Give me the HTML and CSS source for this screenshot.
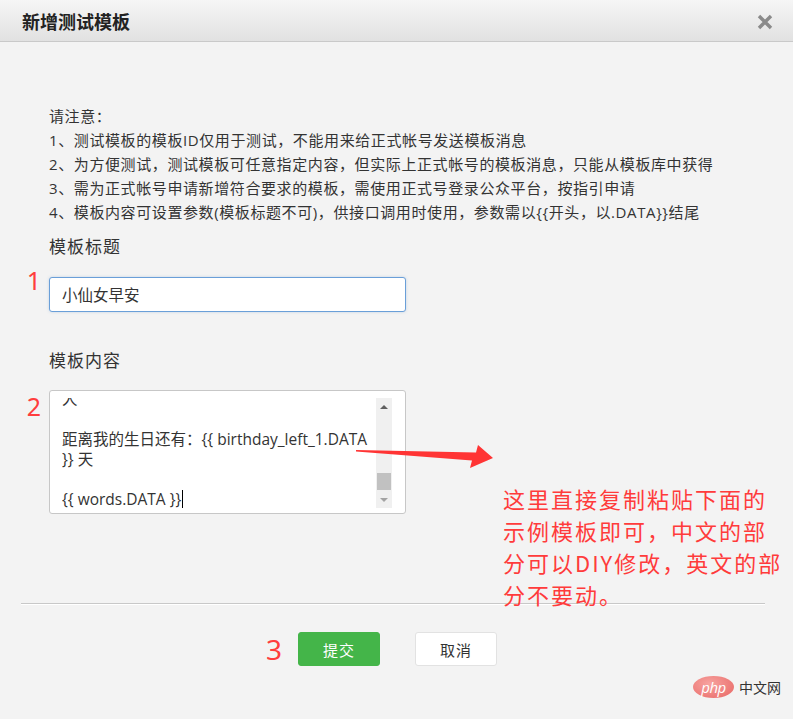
FILE: index.html
```html
<!DOCTYPE html>
<html lang="zh-CN">

<head>
  <meta charset="UTF-8" />
  <meta name="viewport" content="width=device-width, initial-scale=1.0" />
  <title>新增测试模板</title>
  <link rel="stylesheet" href="styles.css">
</head>

<body>
  <div class="dialog">
    <div class="dialog-hd">
      <h3>新增测试模板</h3>
      <span class="close">
        <svg width="16" height="16" viewBox="0 0 16 16">
          <path d="M2 2 L14 14 M14 2 L2 14" stroke="#8a8a8a" stroke-width="3.4" fill="none" />
        </svg>
      </span>
    </div>

    <div class="dialog-bd">
      <div class="notice">
        <p>请注意：</p>
        <p>1、测试模板的模板ID仅用于测试，不能用来给正式帐号发送模板消息</p>
        <p>2、为方便测试，测试模板可任意指定内容，但实际上正式帐号的模板消息，只能从模板库中获得</p>
        <p>3、需为正式帐号申请新增符合要求的模板，需使用正式号登录公众平台，按指引申请</p>
        <p>4、模板内容可设置参数(模板标题不可)，供接口调用时使用，参数需以{{开头，以.DATA}}结尾</p>
      </div>

      <div class="field">
        <label class="field-label">模板标题</label>
        <div class="field-ctrl">
          <span class="mark mark-1">1</span>
          <input class="input" type="text" value="小仙女早安">
        </div>
      </div>

      <div class="field field-content">
        <label class="field-label">模板内容</label>
        <div class="field-ctrl">
          <span class="mark mark-2">2</span>
          <div class="textarea">
            <div class="textarea-view">
              <div class="textarea-text">
                <div>人</div>
                <div>&nbsp;</div>
                <div>距离我的生日还有：{{ birthday_left_1.DATA</div>
                <div>}} 天</div>
                <div>&nbsp;</div>
                <div>{{ words.DATA }}<span class="caret"></span></div>
              </div>
            </div>
            <div class="scrollbar">
              <div class="sb-btn"><i class="tri-up"></i></div>
              <div class="sb-track"><div class="sb-thumb"></div></div>
              <div class="sb-btn"><i class="tri-down"></i></div>
            </div>
          </div>
        </div>
      </div>
    </div>

    <div class="dialog-ft">
      <div class="btns">
        <div class="btn-group">
          <span class="mark mark-3">3</span>
          <a class="btn btn-primary">提交</a>
          <a class="btn btn-default">取消</a>
        </div>
      </div>
    </div>

    <!-- 标注 -->
    <svg class="arrow" width="150" height="35" viewBox="0 0 150 35">
      <polygon points="6,10 126,12.5 128,5 143,18 120,28 122,20.5 6,11.5" fill="#ff3434" />
    </svg>
    <div class="note">这里直接复制粘贴下面的<br>示例模板即可，中文的部<br>分可以DIY修改，英文的部<br>分不要动。</div>

    <div class="watermark">
      <span class="php-logo">php</span>
      <span class="php-cn">中文网</span>
    </div>
  </div>
</body>

</html>
```

FILE: styles.css
```css
* {
  box-sizing: border-box;
}

html,
body {
  margin: 0;
}

body {
  background-color: #f3f3f3;
  font-family: "Open Sans", "Noto Sans CJK SC", sans-serif;
  color: #333;
}

.dialog {
  position: relative;
  width: 793px;
  height: 719px;
  overflow: hidden;
}

.dialog-hd {
  height: 42px;
  display: flex;
  align-items: center;
  justify-content: space-between;
  padding: 0 20px 0 22px;
  background: linear-gradient(#f6f6f6, #e1e1e1);
  border-bottom: 1px solid #c9c9c9;
}

.dialog-hd h3 {
  margin: 0;
  font-family: "Noto Sans CJK SC", sans-serif;
  font-size: 18px;
  font-weight: bold;
  color: #222;
}

.close {
  display: flex;
  margin-top: 2px;
}

.dialog-bd {
  padding: 62px 0 0 49px;
}

.notice {
  font-size: 15px;
  letter-spacing: 0.6px;
  line-height: 24px;
  color: #333;
}

.notice p {
  margin: 0;
}

.field-label {
  display: block;
  margin-top: 10px;
  font-family: "Noto Sans CJK SC", sans-serif;
  font-size: 17px;
  letter-spacing: 1px;
  line-height: 24px;
  color: #333;
}

.field-content .field-label {
  margin-top: 36px;
}

.field-ctrl {
  position: relative;
  width: 357px;
  margin-top: 19px;
}

.field-content .field-ctrl {
  margin-top: 18px;
}

.input {
  display: block;
  width: 357px;
  height: 35px;
  padding: 0 12px;
  border: 1px solid #6a9fd8;
  border-radius: 3px;
  background-color: #fff;
  box-shadow: 0 0 3px rgba(102, 153, 204, 0.35);
  font-family: "Open Sans", "Noto Sans CJK SC", sans-serif;
  font-size: 15.5px;
  color: #333;
  outline: none;
}

.textarea {
  display: flex;
  height: 124px;
  padding: 7px 13px 5px 12px;
  border: 1px solid #c7c7c7;
  border-radius: 3px;
  background-color: #fff;
}

.textarea-view {
  flex: 1;
  overflow: hidden;
}

.textarea-text {
  margin-top: -9px;
  font-size: 15.5px;
  line-height: 20px;
  white-space: nowrap;
  color: #333;
}

.caret {
  display: inline-block;
  width: 1px;
  height: 20px;
  margin-left: 1px;
  vertical-align: -5px;
  background-color: #000;
}

.scrollbar {
  flex: none;
  display: flex;
  flex-direction: column;
  width: 16px;
  background-color: #f0f0f0;
}

.sb-btn {
  height: 17px;
  display: flex;
  align-items: center;
  justify-content: center;
}

.sb-track {
  flex: 1;
}

.sb-thumb {
  height: 17px;
  margin: 58px 1px 0;
  background-color: #c1c1c1;
}

.tri-up,
.tri-down {
  width: 0;
  height: 0;
  border-left: 4px solid transparent;
  border-right: 4px solid transparent;
}

.tri-up {
  border-bottom: 4px solid #606060;
}

.tri-down {
  border-top: 4px solid #a3a3a3;
}

.mark {
  position: absolute;
  font-family: "Noto Sans", sans-serif;
  color: #ff3d3d;
  text-align: right;
}

.mark-1,
.mark-2 {
  right: calc(100% + 8px);
  font-size: 25px;
  line-height: 25px;
}

.mark-1 {
  top: -9px;
}

.mark-2 {
  top: 4px;
}

.mark-3 {
  right: calc(100% + 16px);
  top: 3px;
  font-size: 28px;
  line-height: 28px;
}

.dialog-ft {
  margin: 89px 28px 0 21px;
  padding-top: 28px;
  border-top: 1px solid #c8c8c8;
  box-shadow: inset 0 1px 0 #fff;
}

.btns {
  display: flex;
  justify-content: center;
  padding-left: 9px;
}

.btn-group {
  position: relative;
  display: flex;
  gap: 35px;
}

.btn {
  width: 82px;
  height: 34px;
  display: flex;
  align-items: center;
  justify-content: center;
  border: 1px solid;
  border-radius: 3px;
  font-family: "Noto Sans CJK SC", sans-serif;
  font-size: 15px;
  letter-spacing: 1px;
}

.btn-primary {
  background-color: #44b549;
  border-color: #44b549;
  color: #fff;
}

.btn-default {
  background-color: #fff;
  border-color: #e2e2e2;
  color: #333;
}

.arrow {
  position: absolute;
  left: 350px;
  top: 440px;
}

.note {
  position: absolute;
  left: 503px;
  top: 482px;
  font-family: "Noto Sans CJK SC", sans-serif;
  font-size: 22px;
  letter-spacing: 2px;
  line-height: 32px;
  white-space: nowrap;
  color: #ff3b3b;
}

.watermark {
  position: absolute;
  left: 693px;
  top: 676px;
  display: flex;
  align-items: center;
  gap: 5px;
}

.php-logo {
  width: 41px;
  height: 22px;
  display: flex;
  align-items: center;
  justify-content: center;
  border-radius: 50%;
  background: radial-gradient(ellipse at 40% 35%, #f7a3a0, #e86663);
  font-family: "Open Sans", sans-serif;
  font-style: italic;
  font-size: 15px;
  color: #fff;
  letter-spacing: -0.5px;
}

.php-cn {
  font-family: "Noto Sans CJK SC", sans-serif;
  font-size: 14px;
  color: #333;
}
```
